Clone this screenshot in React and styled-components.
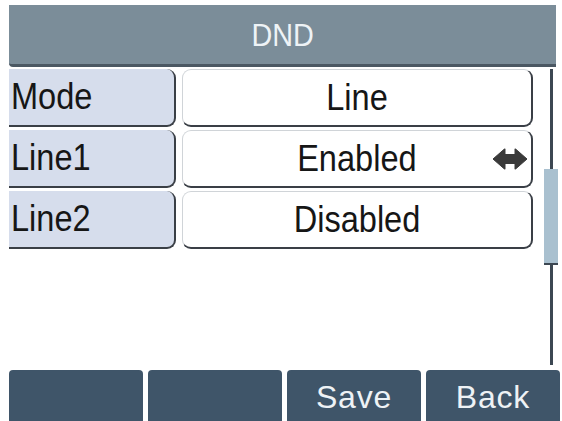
import React from 'react';
import styled, { createGlobalStyle } from 'styled-components';

const GlobalStyle = createGlobalStyle`
  html, body {
    margin: 0;
    padding: 0;
    background: #ffffff;
  }
  body {
    font-family: "Liberation Sans", Arial, sans-serif;
  }
`;

const Screen = styled.div`
  width: 562px;
  height: 421px;
  box-sizing: border-box;
  padding: 5px 0 0 9px;
  display: flex;
  flex-direction: column;
  overflow: hidden;
  background: #ffffff;
`;

const TitleBar = styled.div`
  height: 57px;
  margin-right: 6px;
  background: #7b8d99;
  border-bottom: 3px solid #4b5863;
  border-radius: 0 0 0 4px;
  color: #eef3f6;
  font-size: 32px;
  display: flex;
  align-items: center;
  justify-content: center;
  padding-top: 2px;
`;

/* the phone's screen font is taller than it is wide */
const Narrow = styled.span`
  display: inline-block;
  white-space: nowrap;
  transform: scaleX(${p => p.$sx || 0.88});
  transform-origin: ${p => (p.$left ? 'left center' : 'center')};
`;

const Main = styled.div`
  flex: 1;
  display: flex;
  margin-top: 2px;
  min-height: 0;
`;

const List = styled.div`
  width: 524px;
  display: flex;
  flex-direction: column;
  gap: 3px;
`;

const Row = styled.div`
  height: 58px;
  display: grid;
  grid-template-columns: 167px 1fr;
  gap: 6px;
`;

const Label = styled.div`
  background: #d6ddec;
  border-right: 2px solid #3a3f46;
  border-bottom: 2px solid #3a3f46;
  border-radius: 0 9px 9px 0;
  color: #161616;
  font-size: 37px;
  display: flex;
  align-items: center;
  padding-left: 2px;
`;

const Value = styled.div`
  position: relative;
  background: #ffffff;
  border: 1px solid #d0d4d8;
  border-right: 2px solid #3a3f46;
  border-bottom: 2px solid #3a3f46;
  border-radius: 9px;
  color: #161616;
  font-size: 37px;
  display: flex;
  align-items: center;
  justify-content: center;
`;

const SwitchArrow = styled.svg`
  position: absolute;
  right: 4px;
  top: 50%;
  transform: translateY(-50%);
  width: 34px;
  height: 21px;
`;

const ScrollColumn = styled.div`
  width: 29px;
  box-sizing: border-box;
  padding: 0 4px 5px 11px;
  display: flex;
`;

const Track = styled.div`
  width: 14px;
  display: flex;
  flex-direction: column;
  align-items: center;
`;

const Rail = styled.div`
  width: 3px;
  background: #3c4752;
  flex: ${p => (p.$grow ? 1 : 'none')};
  height: ${p => (p.$grow ? 'auto' : `${p.$size}px`)};
`;

const Thumb = styled.div`
  width: 14px;
  height: 96px;
  background: #a9c0cf;
  border-bottom: 2px solid #3c4752;
  box-sizing: border-box;
`;

const SoftKeys = styled.div`
  height: 51px;
  display: grid;
  grid-template-columns: repeat(4, 134px);
  gap: 5px;
`;

const SoftKey = styled.div`
  background: #3f5569;
  border-radius: 4px 4px 0 0;
  color: #eef2f5;
  font-size: 32px;
  display: flex;
  align-items: center;
  justify-content: center;
  padding-top: 4px;
  letter-spacing: 0.8px;
`;

const rows = [
  { label: 'Mode', value: 'Line' },
  { label: 'Line1', value: 'Enabled', arrow: true },
  { label: 'Line2', value: 'Disabled' },
];

const keys = ['', '', 'Save', 'Back'];

// left/right switch marker on an editable option
function Arrow() {
  return (
    <SwitchArrow viewBox="0 0 34 21">
      <path
        d="M0 10.5 L12 0 L12 6 L22 6 L22 0 L34 10.5 L22 21 L22 15 L12 15 L12 21 Z"
        fill="#3a3a3a"
        stroke="#3a3a3a"
        strokeWidth="1"
        strokeLinejoin="round"
      />
    </SwitchArrow>
  );
}

export default function App() {
  return (
    <>
      <GlobalStyle />
      <Screen>
        <TitleBar>
          <Narrow $sx={0.9}>DND</Narrow>
        </TitleBar>
        <Main>
          <List>
            {rows.map(r => (
              <Row key={r.label}>
                <Label>
                  <Narrow $left>{r.label}</Narrow>
                </Label>
                <Value>
                  <Narrow>{r.value}</Narrow>
                  {r.arrow && <Arrow />}
                </Value>
              </Row>
            ))}
          </List>
          <ScrollColumn>
            <Track>
              <Rail $size={100} />
              <Thumb />
              <Rail $grow />
            </Track>
          </ScrollColumn>
        </Main>
        <SoftKeys>
          {keys.map((k, i) => (
            <SoftKey key={i}>{k}</SoftKey>
          ))}
        </SoftKeys>
      </Screen>
    </>
  );
}
